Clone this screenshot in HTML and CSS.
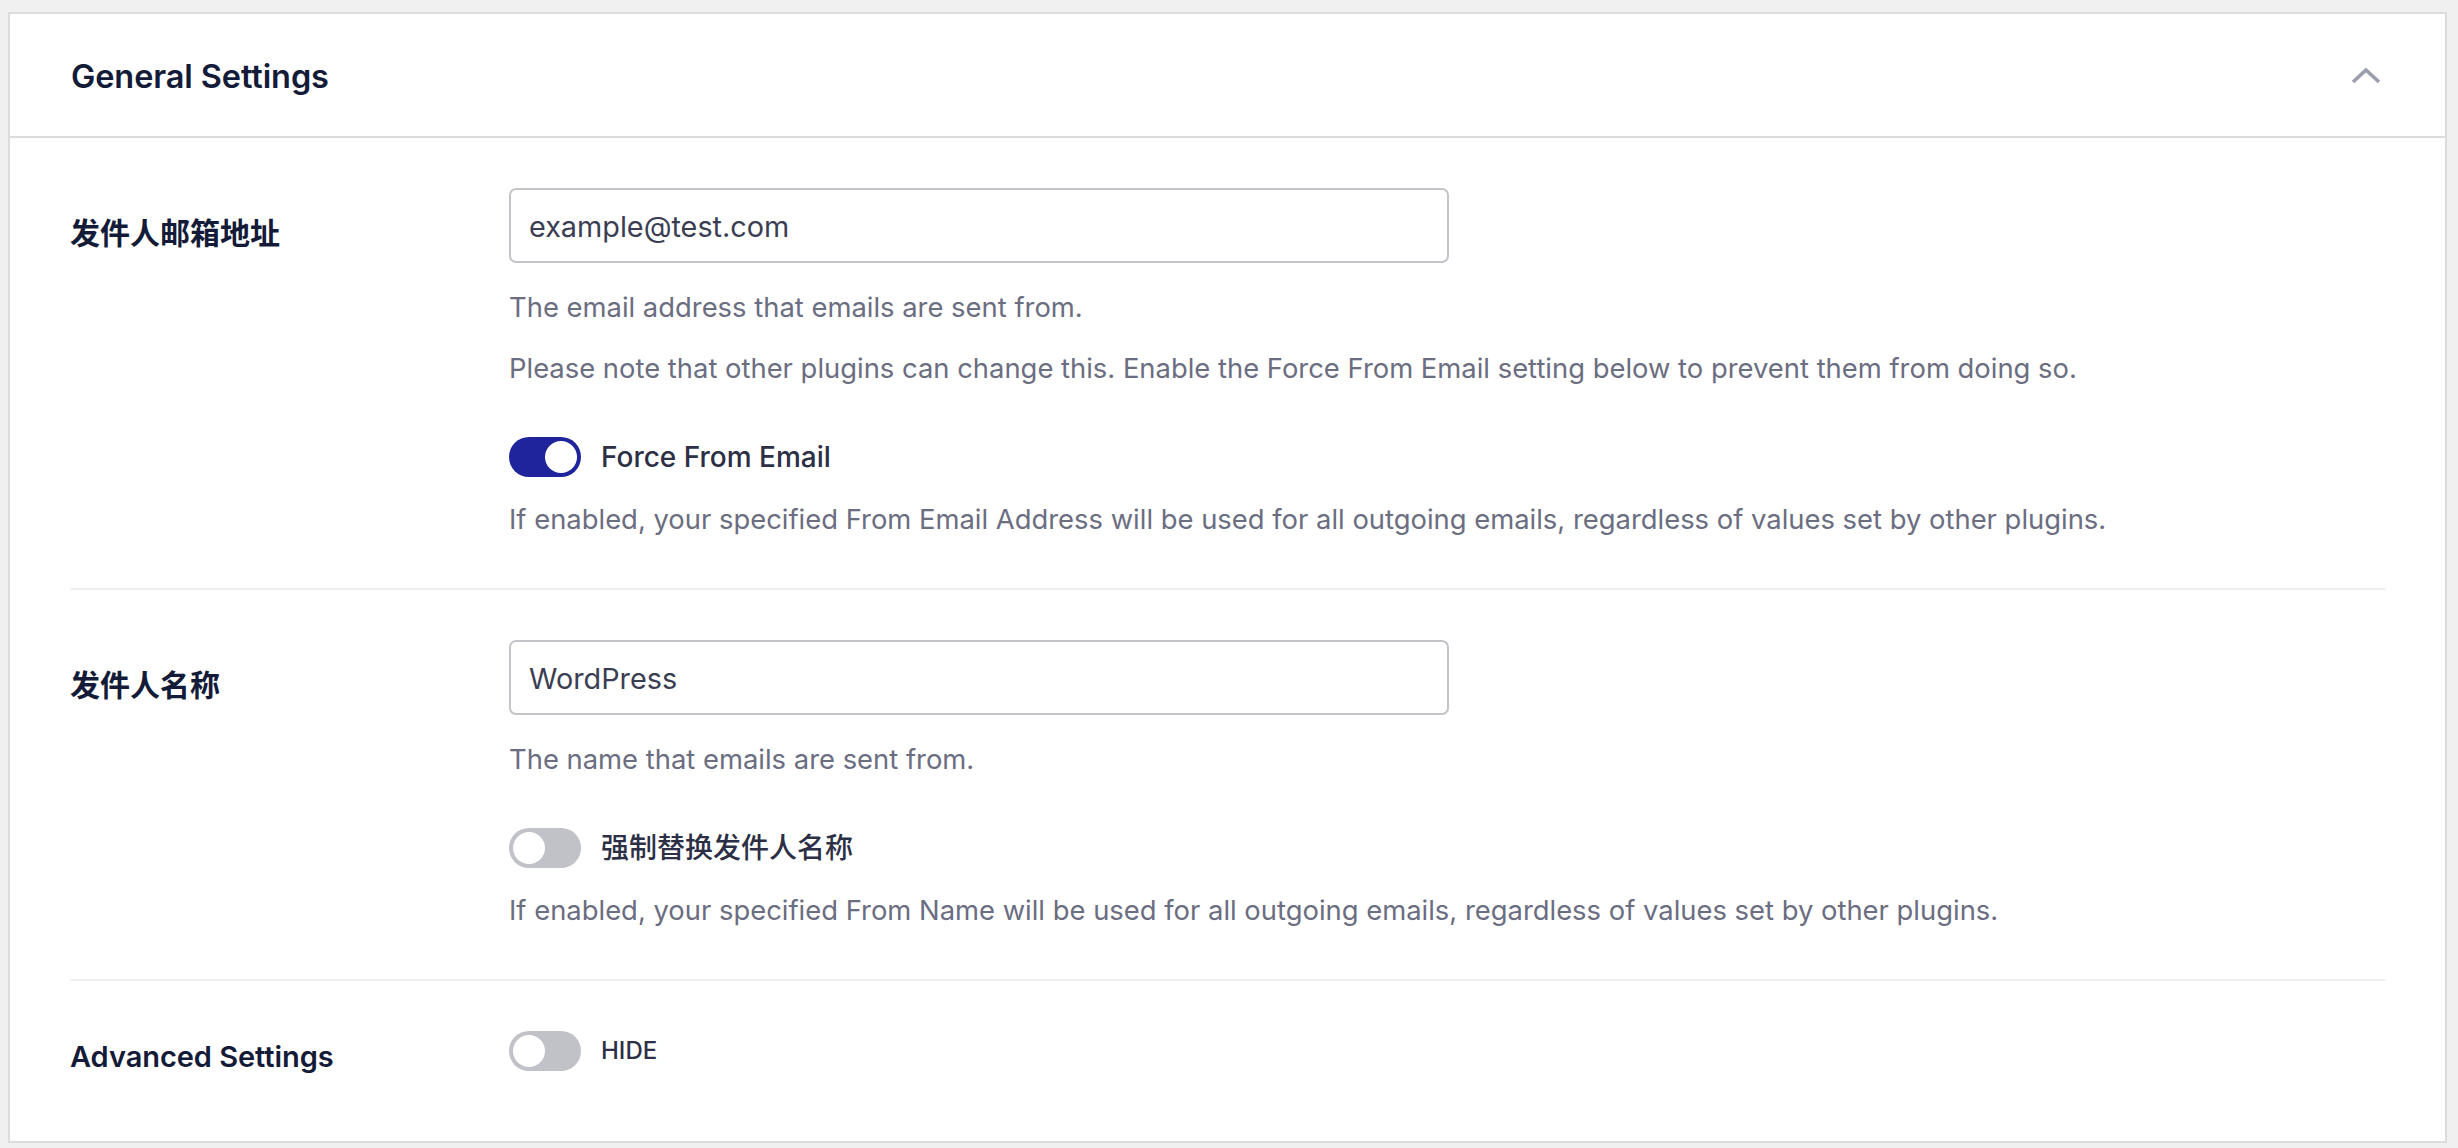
FILE: index.html
```html
<!DOCTYPE html>
<html lang="zh-CN">
<head>
<meta charset="utf-8">
<title>General Settings</title>
<link rel="stylesheet" href="styles.css">
</head>
<body>
<div class="card">
  <div class="card-header">
    <h2 class="title">General Settings</h2>
    <svg class="chevron" width="30" height="16" viewBox="0 0 30 16" aria-hidden="true">
      <polyline points="2,14 15,2 28,14" fill="none" stroke="#9b9dac" stroke-width="3.6" stroke-linecap="butt" stroke-linejoin="miter"/>
    </svg>
  </div>
  <div class="card-body">
    <div class="row">
      <div class="label label-input">发件人邮箱地址</div>
      <div class="field">
        <input class="text-input" type="text" value="example@test.com">
        <p class="desc">The email address that emails are sent from.</p>
        <p class="desc">Please note that other plugins can change this. Enable the Force From Email setting below to prevent them from doing so.</p>
        <div class="toggle-row">
          <span class="toggle on"><span class="knob"></span></span>
          <span class="toggle-label">Force From Email</span>
        </div>
        <p class="desc desc-after">If enabled, your specified From Email Address will be used for all outgoing emails, regardless of values set by other plugins.</p>
      </div>
    </div>
    <div class="row">
      <div class="label label-input">发件人名称</div>
      <div class="field">
        <input class="text-input" type="text" value="WordPress">
        <p class="desc">The name that emails are sent from.</p>
        <div class="toggle-row">
          <span class="toggle"><span class="knob"></span></span>
          <span class="toggle-label">强制替换发件人名称</span>
        </div>
        <p class="desc desc-after">If enabled, your specified From Name will be used for all outgoing emails, regardless of values set by other plugins.</p>
      </div>
    </div>
    <div class="row row-last">
      <div class="label label-toggle">Advanced Settings</div>
      <div class="field">
        <div class="toggle-row toggle-first">
          <span class="toggle"><span class="knob"></span></span>
          <span class="toggle-label hide-label">HIDE</span>
        </div>
      </div>
    </div>
  </div>
</div>
</body>
</html>
```

FILE: styles.css
```css
html, body {
  background: #f0f0f1;
}
body {
  margin: 12px 11px 0 8px;
  font-family: Inter, "Noto Sans CJK SC", sans-serif;
  color: #141b38;
}
.card {
  background: #ffffff;
  border: 2px solid #dcdcde;
  box-sizing: border-box;
}
.card-header {
  display: flex;
  align-items: center;
  justify-content: space-between;
  padding: 3px 64px 0 61px;
  height: 124px;
  border-bottom: 2px solid #dcdcde;
  box-sizing: border-box;
}
.title {
  margin: 0;
  font-size: 32.5px;
  line-height: 40px;
  font-weight: 600;
  color: #141b38;
  letter-spacing: -0.1px;
}
.chevron {
  display: block;
  margin-top: -2px;
}
.card-body {
  padding: 0 59px 0 60px;
}
.row {
  display: grid;
  grid-template-columns: 439px 1fr;
  padding: 50px 0 49px;
  border-bottom: 2px solid #f0f0f1;
}
.row-last {
  border-bottom: none;
  padding-bottom: 64px;
}
.label {
  font-size: 30px;
  line-height: 40px;
  font-weight: 600;
  color: #141b38;
}
.label-input {
  padding-top: 25px;
}
.label-toggle {
  padding-top: 6px;
  font-size: 29px;
  letter-spacing: -0.05px;
}
.field {
  display: flex;
  flex-direction: column;
  align-items: flex-start;
}
.text-input {
  width: 940px;
  height: 75px;
  box-sizing: border-box;
  border: 2px solid #c3c4c7;
  border-radius: 7px;
  padding: 2px 18px 0;
  margin: 0;
  font-family: Inter, "Noto Sans CJK SC", sans-serif;
  font-size: 28.8px;
  color: #3b3e53;
  background: #ffffff;
  outline: none;
}
.desc {
  margin: 21px 0 0;
  font-size: 27.4px;
  line-height: 40px;
  color: #6b6d81;
}
.text-input + .desc {
  margin-top: 24px;
}
.desc-after {
  margin-top: 22px;
}
.toggle-row {
  display: flex;
  align-items: center;
  gap: 20px;
  margin-top: 49px;
  height: 40px;
}
.toggle-first {
  margin-top: 0;
}
.toggle {
  position: relative;
  display: block;
  width: 72px;
  height: 40px;
  border-radius: 20px;
  background: #c1c2c7;
  flex: none;
}
.toggle.on {
  background: #1f249c;
}
.knob {
  position: absolute;
  top: 4px;
  left: 4px;
  width: 32px;
  height: 32px;
  border-radius: 50%;
  background: #ffffff;
}
.toggle.on .knob {
  left: 36px;
}
.toggle-label {
  font-size: 28px;
  line-height: 40px;
  font-weight: 500;
  color: #2c2f45;
}
.hide-label {
  font-size: 24px;
  font-weight: 500;
}
```
